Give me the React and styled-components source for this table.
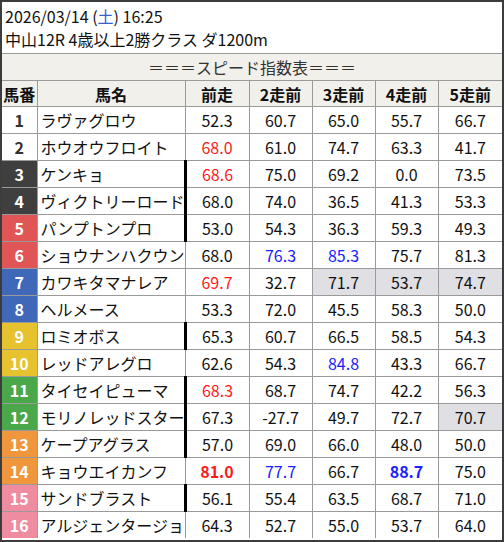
import styled, { createGlobalStyle } from "styled-components";

const GlobalStyle = createGlobalStyle`
  html, body {
    margin: 0;
    padding: 0;
    background: #ffffff;
  }
  body {
    font-family: "Noto Sans CJK JP", "Noto Sans", sans-serif;
  }
`;

// Outer frame around the whole sheet
const Frame = styled.div`
  width: 504px;
  height: 542px;
  box-sizing: border-box;
  border: 2px solid #3c3c3c;
  background: #fff;
  overflow: hidden;
`;

const Heading = styled.div`
  height: 52px;
  box-sizing: border-box;
  padding: 3px 0 0 3px;
  border-bottom: 1px solid #9a9a9a;
  color: #111;
  font-size: 16px;
  line-height: 23px;
`;

const Sat = styled.span`
  color: #3a5fcd;
`;

const Sheet = styled.table`
  width: 500px;
  table-layout: fixed;
  border-collapse: collapse;
  border-style: hidden;
  font-size: 16px;
  color: #111;
`;

const Col = styled.col`
  width: ${(p) => p.$w}px;
`;

const TitleCell = styled.td`
  height: 26px;
  padding: 0;
  text-align: center;
  background: #f2f0eb;
  color: #333;
  border: 1px solid #9a9a9a;
`;

const HeadCell = styled.th`
  height: 25px;
  padding: 0;
  font-weight: 700;
  background: #f2f0eb;
  border: 1px solid #9a9a9a;
`;

const bgByNo = (n) => {
  if (n <= 2) return "#ffffff";
  if (n <= 4) return "#3f3f3f";
  if (n <= 6) return "#e05555";
  if (n <= 8) return "#4068b8";
  if (n <= 10) return "#e6c22e";
  if (n <= 12) return "#4aa84a";
  if (n <= 14) return "#f0963c";
  return "#f08ca0";
};

const NoCell = styled.td`
  height: 26px;
  padding: 0;
  text-align: center;
  font-weight: 700;
  background: ${(p) => bgByNo(p.$no)};
  color: ${(p) => (p.$no <= 2 ? "#333" : "#fff")};
  border: 1px solid #9a9a9a;
`;

const NameCell = styled.td`
  padding: 0 0 0 3px;
  white-space: nowrap;
  overflow: hidden;
  border: 1px solid #9a9a9a;
`;

const ScoreCell = styled.td`
  padding: 0;
  text-align: center;
  border: 1px solid #9a9a9a;
  border-left: ${(p) => (p.$mark ? "3px solid #000" : "1px solid #9a9a9a")};
  background: ${(p) => (p.$shade ? "#e0e0e4" : "transparent")};
  color: ${(p) => (p.$tone === "r" ? "#ff1a1a" : p.$tone === "b" ? "#2020ff" : "#111")};
  font-weight: ${(p) => (p.$bold ? 700 : 400)};
`;

// [no, name, scores, marked, styles per score]
// style codes: r red, b blue, R bold red, B bold blue, g grey cell
const rows = [
  [1, "ラヴァグロウ", ["52.3", "60.7", "65.0", "55.7", "66.7"], false, {}],
  [2, "ホウオウフロイト", ["68.0", "61.0", "74.7", "63.3", "41.7"], false, { 0: "r" }],
  [3, "ケンキョ", ["68.6", "75.0", "69.2", "0.0", "73.5"], true, { 0: "r" }],
  [4, "ヴィクトリーロード", ["68.0", "74.0", "36.5", "41.3", "53.3"], true, {}],
  [5, "パンプトンプロ", ["53.0", "54.3", "36.3", "59.3", "49.3"], true, {}],
  [6, "ショウナンハクウン", ["68.0", "76.3", "85.3", "75.7", "81.3"], false, { 1: "b", 2: "b" }],
  [7, "カワキタマナレア", ["69.7", "32.7", "71.7", "53.7", "74.7"], false, { 0: "r", 2: "g", 3: "g", 4: "g" }],
  [8, "ヘルメース", ["53.3", "72.0", "45.5", "58.3", "50.0"], false, {}],
  [9, "ロミオボス", ["65.3", "60.7", "66.5", "58.5", "54.3"], true, {}],
  [10, "レッドアレグロ", ["62.6", "54.3", "84.8", "43.3", "66.7"], false, { 2: "b" }],
  [11, "タイセイピューマ", ["68.3", "68.7", "74.7", "42.2", "56.3"], true, { 0: "r" }],
  [12, "モリノレッドスター", ["67.3", "-27.7", "49.7", "72.7", "70.7"], true, { 4: "g" }],
  [13, "ケープアグラス", ["57.0", "69.0", "66.0", "48.0", "50.0"], true, {}],
  [14, "キョウエイカンフ", ["81.0", "77.7", "66.7", "88.7", "75.0"], false, { 0: "R", 1: "b", 3: "B" }],
  [15, "サンドブラスト", ["56.1", "55.4", "63.5", "68.7", "71.0"], true, {}],
  [16, "アルジェンタージョ", ["64.3", "52.7", "55.0", "53.7", "64.0"], false, {}],
];

const heads = ["前走", "2走前", "3走前", "4走前", "5走前"];
const widths = [35, 148, 64, 63, 63, 63, 64];

export default function App() {
  return (
    <>
      <GlobalStyle />
      <Frame>
        <Heading>
          <div>
            2026/03/14 (<Sat>土</Sat>) 16:25
          </div>
          <div>中山12R 4歳以上2勝クラス ダ1200m</div>
        </Heading>
        <Sheet>
          <colgroup>
            {widths.map((w, i) => (
              <Col key={i} $w={w} />
            ))}
          </colgroup>
          <tbody>
            <tr>
              <TitleCell colSpan={7}>＝＝＝スピード指数表＝＝＝</TitleCell>
            </tr>
            <tr>
              <HeadCell>馬番</HeadCell>
              <HeadCell>馬名</HeadCell>
              {heads.map((h) => (
                <HeadCell key={h}>{h}</HeadCell>
              ))}
            </tr>
            {rows.map(([no, name, scores, marked, marks]) => (
              <tr key={no}>
                <NoCell $no={no}>{no}</NoCell>
                <NameCell>{name}</NameCell>
                {scores.map((s, i) => {
                  const m = marks[i];
                  return (
                    <ScoreCell
                      key={i}
                      $mark={i === 0 && marked}
                      $shade={m === "g"}
                      $tone={m === "r" || m === "R" ? "r" : m === "b" || m === "B" ? "b" : ""}
                      $bold={m === "R" || m === "B"}
                    >
                      {s}
                    </ScoreCell>
                  );
                })}
              </tr>
            ))}
          </tbody>
        </Sheet>
      </Frame>
    </>
  );
}
